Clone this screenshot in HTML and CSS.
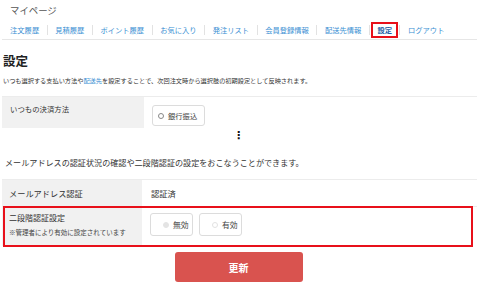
FILE: index.html
```html
<!DOCTYPE html>
<html lang="ja">
<head>
<meta charset="utf-8">
<title>設定</title>
<link rel="stylesheet" href="styles.css">
</head>
<body>
<div class="page">
  <div class="mypage-title">マイページ</div>
  <ul class="nav">
    <li><a href="#">注文履歴</a></li>
    <li><a href="#">見積履歴</a></li>
    <li><a href="#">ポイント履歴</a></li>
    <li><a href="#">お気に入り</a></li>
    <li><a href="#">発注リスト</a></li>
    <li><a href="#">会員登録情報</a></li>
    <li><a href="#">配送先情報</a></li>
    <li class="current"><a href="#">設定</a></li>
    <li><a href="#">ログアウト</a></li>
  </ul>

  <h1 class="heading">設定</h1>
  <p class="desc">いつも選択する支払い方法や<a href="#">配送先</a>を設定することで、次回注文時から選択肢の初期設定として反映されます。</p>

  <div class="table t1">
    <div class="row r-pay">
      <div class="label">いつもの決済方法</div>
      <div class="value">
        <button class="opt"><span class="radio"></span>銀行振込</button>
      </div>
    </div>
  </div>

  <div class="more">⋮</div>

  <p class="desc2">メールアドレスの認証状況の確認や二段階認証の設定をおこなうことができます。</p>

  <div class="table t2">
    <div class="row r-mail">
      <div class="label">メールアドレス認証</div>
      <div class="value plain">認証済</div>
    </div>
    <div class="row r-2fa">
      <div class="label">
        <div>二段階認証設定</div>
        <div class="note">※管理者により有効に設定されています</div>
      </div>
      <div class="value">
        <button class="opt opt-lg"><span class="radio checked"></span>無効</button>
        <button class="opt opt-lg"><span class="radio"></span>有効</button>
      </div>
      <div class="highlight"></div>
    </div>
  </div>

  <div class="actions">
    <button class="submit">更新</button>
  </div>
</div>
</body>
</html>
```

FILE: styles.css
```css
* { box-sizing: border-box; }
html, body { margin: 0; padding: 0; background: #fff; }
body {
  font-family: "Noto Sans CJK JP", "Noto Sans", sans-serif;
  color: #333;
  width: 477px;
  height: 290px;
  overflow: hidden;
}
.page { padding: 0; }

.mypage-title {
  height: 20px;
  line-height: 20px;
  font-size: 9.4px;
  color: #555;
  padding-left: 10px;
}

.nav {
  list-style: none;
  margin: 0 0 0 2px;
  padding: 0 0 0 0.5px;
  height: 20px;
  display: flex;
  align-items: center;
  border-bottom: 1px solid #e6e6e6;
  width: 475px;
}
.nav li {
  position: relative;
  padding: 0 7.5px;
  font-size: 7.3px;
  line-height: 10px;
  white-space: nowrap;
}
.nav li + li { border-left: 1px solid #e2e2e2; }
.nav a { color: #3b8fd3; text-decoration: none; }
.nav li.current a { color: #1f5fa6; font-weight: bold; }
.nav li.current::after {
  content: "";
  position: absolute;
  left: 1px;
  right: 1px;
  top: -3px;
  bottom: -3px;
  border: 2px solid #e8101a;
}

.heading {
  margin: 0;
  padding: 13px 0 0 3px;
  font-size: 12.5px;
  line-height: 16px;
  font-weight: bold;
  color: #222;
}
.desc {
  margin: 0;
  padding: 7px 0 0 3px;
  font-size: 6.2px;
  line-height: 10px;
  color: #333;
}
.desc a { color: #3b8fd3; text-decoration: none; }

.table { margin-left: 2px; width: 475px; }
.t1 { margin-top: 10px; border-top: 1px solid #ececec; }
.row { display: flex; position: relative; }
.row + .row { border-top: 1px solid #ececec; }
.label {
  width: 142px;
  background: #f1f1f1;
  padding-left: 8px;
  font-size: 7.4px;
  color: #333;
}
.value { padding-left: 8px; display: flex; gap: 6px; }

.r-pay { height: 31px; }
.r-pay .label { padding-top: 7px; line-height: 10px; }
.r-pay .value { padding-top: 8px; }

.opt {
  font-family: inherit;
  display: inline-flex;
  align-items: center;
  background: #fff;
  border: 1px solid #dcdcdc;
  border-radius: 3px;
  height: 21px;
  padding: 0 7px 0 5px;
  font-size: 7.3px;
  color: #444;
  margin: 0;
}
.radio {
  display: inline-block;
  width: 6px;
  height: 6px;
  border: 1px solid #888;
  border-radius: 50%;
  margin-right: 4px;
}
.opt-lg {
  height: 23px;
  width: 43px;
  font-size: 7.8px;
  padding: 0 0 0 12px;
}
.opt-lg .radio { border-color: #e2e2e2; }
.opt-lg .radio.checked { background: #e4e4e4; border-color: #e4e4e4; }

.more {
  text-align: center;
  font-family: "DejaVu Sans", sans-serif;
  font-weight: bold;
  font-size: 11px;
  line-height: 12px;
  height: 14px;
  padding-top: 2px;
  color: #111;
}

.desc2 {
  margin: 0;
  padding: 15px 0 0 5px;
  font-size: 8.1px;
  line-height: 12px;
  color: #333;
}

.t2 { margin-top: 10px; border-top: 1px solid #ececec; }
.r-mail { height: 26px; }
.r-mail .label {
  padding-left: 7px;
  line-height: 26px;
  font-size: 8.2px;
  width: 140px;
}
.value.plain { font-size: 8.3px; line-height: 26px; padding-left: 9px; }

.r-2fa { height: 40px; }
.r-2fa .label {
  padding-left: 7px;
  padding-top: 5px;
  font-size: 8px;
  line-height: 12px;
  width: 140px;
}
.r-2fa .note { font-size: 6.5px; line-height: 12px; padding-top: 2px; color: #444; }
.r-2fa .value { padding-top: 6px; padding-left: 8px; }

.highlight {
  position: absolute;
  left: 1px;
  top: -1px;
  width: 470px;
  height: 41px;
  border: 2px solid #e8101a;
  pointer-events: none;
}

.actions { display: flex; justify-content: center; padding-top: 6px; }
.submit {
  font-family: inherit;
  width: 128px;
  height: 30px;
  background: #d9534f;
  color: #fff;
  border: none;
  border-radius: 3px;
  font-size: 10px;
  font-weight: bold;
}
```
